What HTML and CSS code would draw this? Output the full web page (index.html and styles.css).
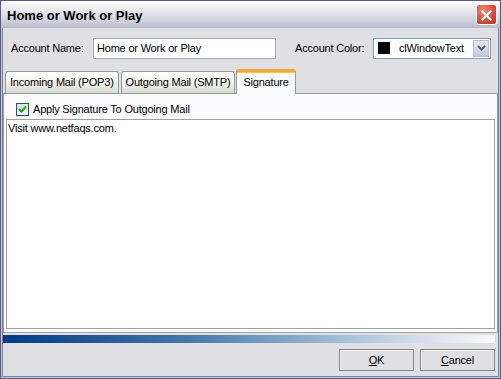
FILE: index.html
```html
<!DOCTYPE html>
<html lang="en">
<head>
    <meta charset="UTF-8">
    <title>Home or Work or Play</title>
    <link rel="stylesheet" href="styles.css">
</head>
<body>
    <div class="window">
        <div class="titlebar">
            <span class="title">Home or Work or Play</span>
            <span class="close">
                <svg width="21" height="21" viewBox="0 0 21 21">
                    <path d="M6 6 L15 15 M15 6 L6 15" stroke="#fff" stroke-width="2.4" stroke-linecap="square"/>
                </svg>
            </span>
        </div>
        <div class="client">
            <div class="account-row">
                <label class="name-label">Account Name:</label>
                <div class="edit">Home or Work or Play</div>
                <label class="color-label">Account Color:</label>
                <div class="combo">
                    <span class="swatch"></span>
                    <span class="combo-text">clWindowText</span>
                    <span class="combo-btn">
                        <svg width="9" height="6" viewBox="0 0 9 6">
                            <path d="M1 1 L4.5 4.5 L8 1" fill="none" stroke="#4d6185" stroke-width="2"/>
                        </svg>
                    </span>
                </div>
            </div>
            <div class="tabs">
                <div class="tab">Incoming Mail (POP3)</div>
                <div class="tab">Outgoing Mail (SMTP)</div>
                <div class="tab selected">Signature</div>
            </div>
            <div class="panel">
                <div class="check-row">
                    <span class="checkbox">
                        <svg width="11" height="11" viewBox="0 0 11 11">
                            <path d="M2 5 L4.5 7.5 L9 2.5" fill="none" stroke="#21a121" stroke-width="2.2"/>
                        </svg>
                    </span>
                    <span>Apply Signature To Outgoing Mail</span>
                </div>
                <div class="memo">Visit www.netfaqs.com.</div>
            </div>
            <div class="gradient-bar"></div>
            <div class="buttons">
                <button class="btn"><u>O</u>K</button>
                <button class="btn"><u>C</u>ancel</button>
            </div>
        </div>
    </div>
</body>
</html>
```

FILE: styles.css
```css
body {
    margin: 0;
    font-family: "Liberation Sans", Arial, sans-serif;
    font-size: 11px;
    letter-spacing: -0.2px;
    color: #000;
}
.window {
    width: 501px;
    height: 379px;
    box-sizing: border-box;
    border: 1px solid #585880;
    box-shadow: inset 0 0 0 1px #c8c8d8, inset 0 0 0 2px #7c7c9c;
    background: #e0dfe3;
    display: flex;
    flex-direction: column;
}
.titlebar {
    height: 27px;
    background: linear-gradient(#ffffff, #e8e8ee 35%, #d0d0dc 75%, #b8b8c8);
    display: flex;
    align-items: center;
    justify-content: space-between;
    padding: 0 3px 0 6px;
}
.title {
    font-size: 13px;
    font-weight: bold;
    letter-spacing: 0;
    color: #000;
    padding-top: 1px;
}
.close {
    width: 21px;
    height: 21px;
    border-radius: 3px;
    border: 1px solid #fff;
    box-sizing: border-box;
    background: radial-gradient(circle at 35% 30%, #f08a78, #d24a3a 60%, #b83222);
    display: flex;
}
.client {
    flex: 1;
    margin: 0 2px 2px 2px;
    display: flex;
    flex-direction: column;
}
.account-row {
    display: flex;
    align-items: center;
    height: 22px;
    margin-top: 9px;
    padding-left: 8px;
}
.name-label {
    width: 82px;
}
.edit {
    width: 178px;
    height: 19px;
    border: 1px solid #a5acb5;
    background: #fff;
    line-height: 19px;
    padding-left: 3px;
}
.color-label {
    margin-left: 19px;
    width: 78px;
}
.combo {
    width: 116px;
    height: 19px;
    border: 1px solid #7f9db9;
    background: #fff;
    display: flex;
    align-items: center;
}
.swatch {
    width: 12px;
    height: 12px;
    background: #000;
    margin-left: 4px;
}
.combo-text {
    flex: 1;
    margin-left: 9px;
}
.combo-btn {
    width: 16px;
    height: 17px;
    margin-right: 1px;
    background: linear-gradient(#e8eaf0, #c4c8d4);
    border: 1px solid #b8bccc;
    box-sizing: border-box;
    display: flex;
    align-items: center;
    justify-content: center;
}
.tabs {
    display: flex;
    align-items: flex-end;
    margin-top: 8px;
    padding-left: 2px;
    height: 26px;
    gap: 2px;
}
.tab {
    height: 21px;
    line-height: 21px;
    padding: 0 4px;
    border: 1px solid #919b9c;
    border-bottom: none;
    border-radius: 3px 3px 0 0;
    background: linear-gradient(#fefefe, #f0f0ea 60%, #d8d8d2);
}
.tab.selected {
    height: 22px;
    line-height: 21px;
    padding: 0 6px;
    margin-left: -1px;
    margin-bottom: -1px;
    position: relative;
    background: #fcfcfe;
    border-top: 3px solid #f5a83c;
    box-shadow: inset 0 1px 0 #ffc83c;
}
.panel {
    flex: 1;
    border: 1px solid #919b9c;
    border-bottom-color: #a0a79c;
    background: #fcfcfe;
    display: flex;
    flex-direction: column;
    padding: 0 2px 3px 2px;
}
.check-row {
    display: flex;
    align-items: center;
    height: 20px;
    padding: 5px 0 0 10px;
    gap: 4px;
}
.checkbox {
    width: 11px;
    height: 11px;
    border: 1px solid #1c5180;
    background: linear-gradient(135deg, #dcdcd6, #fff);
    display: flex;
}
.memo {
    flex: 1;
    border: 1px solid #a0a0a0;
    background: #fff;
    padding: 2px 1px;
}
.gradient-bar {
    height: 8px;
    margin: 2px 3px 0 0;
    background: linear-gradient(90deg, #003a85, #3f72a6 35%, #7aa0c4 55%, #c6d6e6 80%, #f8f8fa);
}
.buttons {
    display: flex;
    justify-content: flex-end;
    gap: 6px;
    padding: 6px 3px 5px 0;
}
.btn {
    width: 75px;
    height: 22px;
    font-family: inherit;
    font-size: 11px;
    letter-spacing: -0.2px;
    background: #e0dfe3;
    border: 1px solid #868686;
    box-shadow: inset 1px 1px 0 #f4f4f4;
    padding: 0;
}
```
